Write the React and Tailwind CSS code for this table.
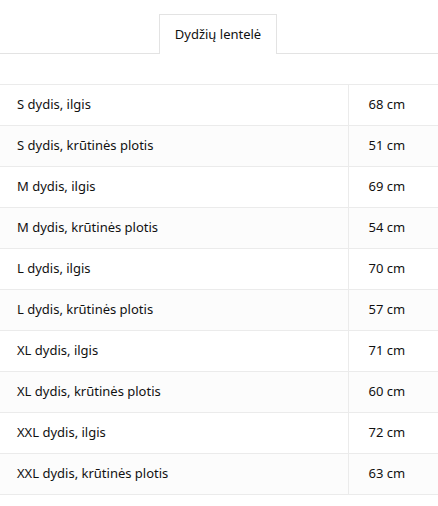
import React from 'react';

const rows = [
  ['S dydis, ilgis', '68 cm'],
  ['S dydis, krūtinės plotis', '51 cm'],
  ['M dydis, ilgis', '69 cm'],
  ['M dydis, krūtinės plotis', '54 cm'],
  ['L dydis, ilgis', '70 cm'],
  ['L dydis, krūtinės plotis', '57 cm'],
  ['XL dydis, ilgis', '71 cm'],
  ['XL dydis, krūtinės plotis', '60 cm'],
  ['XXL dydis, ilgis', '72 cm'],
  ['XXL dydis, krūtinės plotis', '63 cm'],
];

export default function App() {
  return (
    <div className="w-[438px] h-[506px] bg-white text-[13px] text-[#111] font-['Noto_Sans',sans-serif] overflow-hidden">
      {/* tabs */}
      <div className="pt-[14px] flex">
        <div className="border-b border-[#e3e3e3] w-[159px] shrink-0" />
        <div className="w-[118px] h-[40px] border border-b-0 border-[#e3e3e3] flex items-center justify-center">
          Dydžių lentelė
        </div>
        <div className="flex-1 border-b border-[#e3e3e3]" />
      </div>

      <table className="mt-[30px] w-full border-collapse">
        <tbody>
          {rows.map(([label, value], i) => (
            <tr key={i} className={i % 2 ? 'bg-[#fcfcfc]' : 'bg-white'}>
              <td className="h-[41px] pl-[17px] border-y border-[#ebebeb] align-middle">{label}</td>
              <td className="w-[90px] h-[41px] pl-[20px] border-y border-l border-[#ebebeb] align-middle">{value}</td>
            </tr>
          ))}
        </tbody>
      </table>
    </div>
  );
}
